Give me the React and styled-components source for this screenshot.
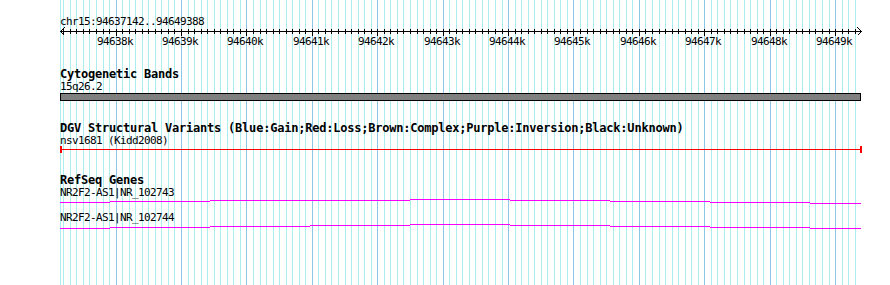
import React from "react";
import styled, { createGlobalStyle } from "styled-components";

const START = 94637142;
const END = 94649388;
const W = 801;
const xOf = (pos) => ((pos - START) * W) / (END - START);

const GlobalStyle = createGlobalStyle`
  html, body { margin: 0; padding: 0; background: #ffffff; }
  #root { width: 890px; height: 285px; }
`;

const Page = styled.div`
  position: relative;
  width: 890px;
  height: 285px;
  overflow: hidden;
  box-sizing: border-box;
  padding-left: 60px;
  background: #ffffff;
`;

const GridLayer = styled.svg`
  position: absolute;
  left: 60px;
  top: 0;
  z-index: 0;
`;

const Panel = styled.div`
  position: relative;
  z-index: 1;
  width: ${W}px;
  display: flex;
  flex-direction: column;
  color: #000;
`;

const SmallText = styled.div`
  font-family: "DejaVu Sans Mono", monospace;
  font-size: 11px;
  letter-spacing: -0.62px;
  line-height: 12px;
  height: 12px;
  white-space: pre;
  margin-top: ${(p) => p.$mt || 0}px;
`;

const Title = styled.div`
  font-family: "DejaVu Sans Mono", monospace;
  font-weight: bold;
  font-size: 12px;
  letter-spacing: -0.22px;
  line-height: 12px;
  height: 12px;
  white-space: pre;
  margin-top: ${(p) => p.$mt || 0}px;
`;

const Glyph = styled.svg`
  display: block;
  overflow: visible;
  margin-top: ${(p) => p.$mt || 0}px;
`;

const BandBar = styled.div`
  box-sizing: border-box;
  width: ${W}px;
  height: 8px;
  background: #808080;
  border: 1px solid #000;
`;

function Grid() {
  const lines = [
    <rect key="edge" x={0} y={0} width={1} height={285} fill="#aaeef0" />,
  ];
  for (let pos = 94637200; pos < END; pos += 100) {
    const major = pos % 1000 === 0;
    lines.push(
      <rect
        key={pos}
        x={Math.floor(xOf(pos))}
        y={0}
        width={1}
        height={285}
        fill={major ? "#8cc6e8" : "#aaeef0"}
      />
    );
  }
  return (
    <GridLayer width={W} height={285}>
      {lines}
    </GridLayer>
  );
}

function Ruler() {
  const ticks = [];
  const labels = [];
  for (let pos = 94637200; pos < END; pos += 100) {
    const major = pos % 1000 === 0;
    const x = Math.floor(xOf(pos));
    ticks.push(
      <rect key={pos} x={x} y={1} width={1} height={major ? 7 : 5} fill="#000" />
    );
    if (major) {
      labels.push(
        <text
          key={"l" + pos}
          x={x - 19}
          y={17}
          fontFamily="DejaVu Sans Mono, monospace"
          fontSize="11"
          letterSpacing="-0.62"
          fill="#000"
        >
          {pos / 1000 + "k"}
        </text>
      );
    }
  }
  return (
    <Glyph width={W + 1} height={20} shapeRendering="crispEdges">
      <rect x={0} y={3} width={W + 1} height={1} fill="#000" />
      {ticks}
      <path d="M0.5 3.5 L4.5 -0.5 M0.5 3.5 L4.5 7.5" stroke="#000" strokeWidth="1" fill="none" />
      <path d={`M${W + 0.5} 3.5 L${W - 3.5} -0.5 M${W + 0.5} 3.5 L${W - 3.5} 7.5`} stroke="#000" strokeWidth="1" fill="none" />
      {labels}
    </Glyph>
  );
}

function Variant() {
  return (
    <Glyph width={W + 1} height={7} shapeRendering="crispEdges">
      <rect x={0} y={2} width={W + 1} height={1} fill="#ff0000" />
      <rect x={0} y={-1} width={2} height={7} fill="#ff0000" />
      <rect x={W - 1} y={-1} width={2} height={7} fill="#ff0000" />
    </Glyph>
  );
}

const BOUNDS = [0, 50, 150, 250, 350, 450, 550, 650, 750, W];

function GeneLine({ offsets, height, mt }) {
  return (
    <Glyph width={W} height={height} $mt={mt} shapeRendering="crispEdges">
      {offsets.map((o, i) => (
        <rect
          key={i}
          x={BOUNDS[i]}
          y={o}
          width={BOUNDS[i + 1] - BOUNDS[i]}
          height={1}
          fill="#ff00ff"
        />
      ))}
    </Glyph>
  );
}

export default function App() {
  return (
    <>
      <GlobalStyle />
      <Page>
        <Grid />
        <Panel>
          <SmallText $mt={16}>chr15:94637142..94649388</SmallText>
          <Ruler />
          <Title $mt={19.5}>Cytogenetic Bands</Title>
          <SmallText $mt={1.5}>15q26.2</SmallText>
          <BandBar />
          <Title $mt={20.5}>
            DGV Structural Variants (Blue:Gain;Red:Loss;Brown:Complex;Purple:Inversion;Black:Unknown)
          </Title>
          <SmallText $mt={1.5}>nsv1681 (Kidd2008)</SmallText>
          <Variant />
          <Title $mt={19.5}>RefSeq Genes</Title>
          <SmallText $mt={1.5}>NR2F2-AS1|NR_102743</SmallText>
          <GeneLine offsets={[3, 2, 1, 1, 0, 1, 2, 3, 4]} height={12} />
          <SmallText $mt={0.5}>NR2F2-AS1|NR_102744</SmallText>
          <GeneLine offsets={[5, 4, 3, 2, 1, 2, 3, 4, 5]} height={8} mt={-0.5} />
        </Panel>
      </Page>
    </>
  );
}
